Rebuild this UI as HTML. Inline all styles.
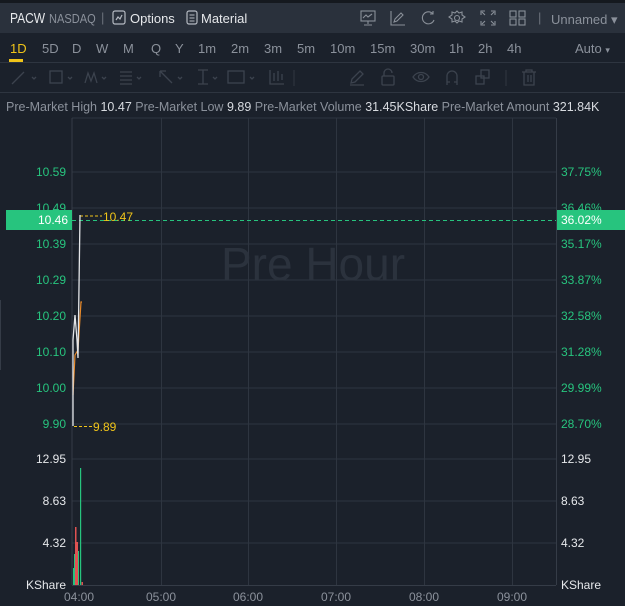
<!DOCTYPE html>
<html><head><style>
*{margin:0;padding:0;box-sizing:border-box}
body{width:625px;height:606px;background:#1b212b;font-family:"Liberation Sans",sans-serif;overflow:hidden;position:relative;color:#c9ccd2}
.top{position:absolute;left:0;top:3px;width:625px;height:30px;background:#2a313c}
.strip{position:absolute;left:0;top:0;width:625px;height:3px;background:#15191f}
.t{position:absolute;white-space:nowrap}
.tf{font-size:13px;color:#8b919b;top:41px}
.tf.a{color:#f0c419}
.sep{position:absolute;left:0;width:625px;height:1px;background:#2e3540}
.ic{position:absolute;top:10px}
.tb{position:absolute;top:68px}
</style></head><body>
<div class="strip"></div>
<div class="top"></div>
<div class="t" style="left:10px;top:10px;font-size:15px;color:#e6e8eb;transform:scaleX(0.8);transform-origin:left">PACW</div>
<div class="t" style="left:49px;top:11px;font-size:13px;color:#8b919b;transform:scaleX(0.85);transform-origin:left">NASDAQ</div>
<div class="t" style="left:101px;top:10px;font-size:13px;color:#6a707a">|</div>
<svg class="ic" style="left:112px" width="14" height="15" viewBox="0 0 14 15"><rect x="1" y="1" width="12" height="13" rx="2" fill="none" stroke="#b5bac2" stroke-width="1.2"/><path d="M4 10l2-3 2 2 2-4" fill="none" stroke="#b5bac2" stroke-width="1.2"/></svg>
<div class="t" style="left:130px;top:11px;font-size:13px;color:#e6e8eb">Options</div>
<svg class="ic" style="left:186px" width="12" height="15" viewBox="0 0 12 15"><rect x="1" y="1" width="10" height="13" rx="2" fill="none" stroke="#b5bac2" stroke-width="1.2"/><path d="M3.5 5h5M3.5 8h5M3.5 11h5" stroke="#b5bac2"/></svg>
<div class="t" style="left:201px;top:11px;font-size:13px;color:#e6e8eb">Material</div>
<svg class="ic" style="left:360px;top:10px" width="170" height="16" viewBox="0 0 170 16" fill="none" stroke="#8a9099" stroke-width="1.1">
<rect x="1" y="1" width="14" height="10"/><path d="M8 11v3M4 15h8M3 8l3-3 2 2 4-3"/>
<path d="M31 1v14h14M34 12l1-3 6-6 2 2-6 6z"/>
<path d="M73 4a6 6 0 1 0 1 6M73 1v3h-3"/>
<circle cx="97" cy="8" r="2.5"/><path d="M97 1l2 2 3-1 0 3 3 2-3 2 0 3-3-1-2 2-2-2-3 1 0-3-3-2 3-2 0-3 3 1z"/>
<path d="M121 5V1h4M131 1h4v4M135 11v4h-4M125 15h-4v-4M122 2l3 3M134 2l-3 3M134 14l-3-3M122 14l3-3"/>
<rect x="150" y="1" width="6" height="6"/><rect x="159" y="1" width="6" height="6"/><rect x="150" y="9" width="6" height="6"/><rect x="159" y="9" width="6" height="6"/>
</svg>
<div class="t" style="left:538px;top:10px;font-size:13px;color:#6a707a">|</div>
<div class="t" style="left:551px;top:12px;font-size:13px;color:#8b919b">Unnamed ▾</div>
<div class="t tf a" style="left:10px">1D</div>
<div style="position:absolute;left:9px;top:59px;width:14px;height:3px;background:#f0c419"></div>
<div class="t tf" style="left:42px">5D</div>
<div class="t tf" style="left:72px">D</div>
<div class="t tf" style="left:96px">W</div>
<div class="t tf" style="left:123px">M</div>
<div class="t tf" style="left:151px">Q</div>
<div class="t tf" style="left:175px">Y</div>
<div class="t tf" style="left:198px">1m</div>
<div class="t tf" style="left:231px">2m</div>
<div class="t tf" style="left:264px">3m</div>
<div class="t tf" style="left:297px">5m</div>
<div class="t tf" style="left:330px">10m</div>
<div class="t tf" style="left:370px">15m</div>
<div class="t tf" style="left:410px">30m</div>
<div class="t tf" style="left:449px">1h</div>
<div class="t tf" style="left:478px">2h</div>
<div class="t tf" style="left:507px">4h</div>
<div class="t tf" style="left:575px">Auto <span style="font-size:9px">▾</span></div>
<div class="sep" style="top:62px"></div>
<svg class="tb" style="left:10px" width="530" height="18" viewBox="0 0 530 18" fill="none" stroke="#3c434e" stroke-width="1.3">
<path d="M2 16L14 4M22 9l2 2 2-2"/>
<rect x="40" y="3" width="12" height="12"/><path d="M58 9l2 2 2-2"/>
<path d="M75 15l3-10 3 8 3-8 3 10M92 9l2 2 2-2"/>
<path d="M110 4h12M110 8h12M110 12h12M110 16h12M127 9l2 2 2-2"/>
<path d="M162 15L150 3M150 3h6M150 3v6M168 9l2 2 2-2"/>
<path d="M188 2h10M188 16h10M193 2v14M203 9l2 2 2-2"/>
<rect x="218" y="3" width="16" height="12"/><path d="M240 9l2 2 2-2"/>
<path d="M260 2v14h14M264 5v8M268 3v10M272 6v6"/>
<path d="M284 2v16" stroke="#2c323c"/>
<path d="M341 15l1-4 8-8 3 3-8 8zM340 17h14"/>
<rect x="372" y="8" width="12" height="9" rx="1"/><path d="M374 8V5a4 4 0 0 1 8 0"/>
<path d="M403 9c4-6 12-6 16 0c-4 6-12 6-16 0z"/><circle cx="411" cy="9" r="2.5"/>
<path d="M437 17V8a5 5 0 0 1 10 0v9M437 14h3M444 14h3"/>
<rect x="466" y="8" width="8" height="8"/><rect x="471" y="2" width="8" height="8"/>
<path d="M496 2v16" stroke="#2c323c"/>
<path d="M512 4h14M516 4V2h6v2M514 4v13h10V4M518 7v7M521 7v7"/>
</svg>
<div class="sep" style="top:92px"></div>
<div class="t" style="left:6px;top:100px;font-size:12.5px;color:#8b919b">Pre-Market High <span style="color:#d8dbe0">10.47</span> Pre-Market Low <span style="color:#d8dbe0">9.89</span> Pre-Market Volume <span style="color:#d8dbe0">31.45KShare</span> Pre-Market Amount <span style="color:#d8dbe0">321.84K</span></div>

<svg style="position:absolute;left:0;top:0" width="625" height="606" viewBox="0 0 625 606" font-family="Liberation Sans, sans-serif" font-size="12">
<g stroke="#2e3540" stroke-width="1">
<path d="M72 118h484"/>
<path d="M72 172H556M72 208H556M72 244H556M72 280H556M72 316H556M72 352H556M72 388H556M72 424H556"/>
<path d="M72 459H556M72 501H556M72 543H556"/>
<path d="M161.5 118V585M248.5 118V585M336.5 118V585M424.5 118V585M512.5 118V585"/>
</g>
<path d="M72 118V585M556.5 118V585M72 585.5H556" stroke="#353c47"/>
<path d="M0.5 300V370" stroke="#353c47"/>
<text x="313" y="280" font-size="46" fill="#2b323d" text-anchor="middle">Pre Hour</text>
<g fill="#27c47e" text-anchor="end">
<text x="66" y="176">10.59</text><text x="66" y="212">10.49</text><text x="66" y="248">10.39</text><text x="66" y="284">10.29</text><text x="66" y="320">10.20</text><text x="66" y="356">10.10</text><text x="66" y="392">10.00</text><text x="66" y="428">9.90</text>
</g>
<g fill="#27c47e">
<text x="561" y="176">37.75%</text><text x="561" y="212">36.46%</text><text x="561" y="248">35.17%</text><text x="561" y="284">33.87%</text><text x="561" y="320">32.58%</text><text x="561" y="356">31.28%</text><text x="561" y="392">29.99%</text><text x="561" y="428">28.70%</text>
</g>
<rect x="6" y="210" width="66" height="20" fill="#27c47e"/>
<text x="68" y="224" fill="#fff" text-anchor="end">10.46</text>
<rect x="557" y="210" width="68" height="20" fill="#27c47e"/>
<text x="561" y="224" fill="#fff">36.02%</text>
<path d="M72 220.5H556" stroke="#27c47e" stroke-dasharray="4,3"/>
<path d="M80 216h22" stroke="#f0c419" stroke-dasharray="3,2"/>
<text x="103" y="221" fill="#f0c419">10.47</text>
<path d="M74 426.5h18" stroke="#f0c419" stroke-dasharray="3,2"/>
<text x="93" y="431" fill="#f0c419">9.89</text>
<path d="M73 395L75 355 78 350 81 302 82 302" fill="none" stroke="#e88a2a" stroke-width="1.2"/>
<path d="M73 426V340L75 315 77 340 78 358 80 215" fill="none" stroke="#e3e5e8" stroke-width="1.3"/>
<g fill="#e6e8eb" text-anchor="end">
<text x="66" y="463">12.95</text><text x="66" y="505">8.63</text><text x="66" y="547">4.32</text><text x="66" y="589">KShare</text>
</g>
<g fill="#e6e8eb"><text x="561" y="463">12.95</text><text x="561" y="505">8.63</text><text x="561" y="547">4.32</text><text x="561" y="589">KShare</text></g>
<rect x="73" y="568" width="1" height="17" fill="#27c47e"/>
<rect x="74" y="554" width="1" height="31" fill="#27c47e"/>
<rect x="75" y="527" width="1.5" height="58" fill="#e05252"/>
<rect x="76.5" y="542" width="1.5" height="43" fill="#e05252"/>
<rect x="78" y="551" width="1" height="34" fill="#27c47e"/>
<rect x="80" y="468" width="1.2" height="117" fill="#27c47e"/>
<rect x="81.5" y="582" width="1.5" height="3" fill="#e05252"/>
<g fill="#8b919b" text-anchor="middle"><text x="79" y="601">04:00</text><text x="161" y="601">05:00</text><text x="248" y="601">06:00</text><text x="336" y="601">07:00</text><text x="424" y="601">08:00</text><text x="512" y="601">09:00</text></g>
</svg>
</body></html>
